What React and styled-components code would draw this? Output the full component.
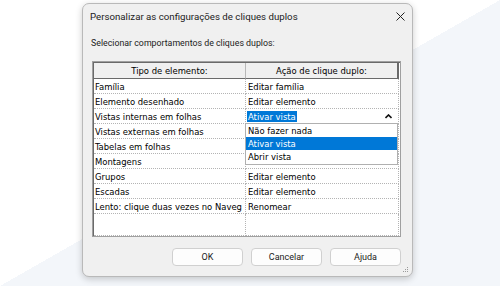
import React from 'react';
import styled, { createGlobalStyle } from 'styled-components';

const GlobalStyle = createGlobalStyle`
  html, body {
    margin: 0;
    padding: 0;
  }
  body {
    width: 500px;
    height: 286px;
    overflow: hidden;
    background: linear-gradient(to bottom right, #ffffff 50%, #f3f6fa 50%);
    font-family: Roboto, "Liberation Sans", sans-serif;
    color: #000;
  }
`;

const Page = styled.div`
  padding: 3px 0 0 82px;
`;

const Dialog = styled.div`
  position: relative;
  width: 331px;
  height: 274px;
  box-sizing: border-box;
  display: flex;
  flex-direction: column;
  background: #f0f0f0;
  border: 1px solid #b9b9b9;
  border-radius: 7px;
  box-shadow: 0 2px 7px rgba(0, 0, 0, 0.2);
`;

const TitleBar = styled.div`
  height: 25px;
  display: flex;
  align-items: center;
  justify-content: space-between;
  padding: 0 3px 0 7px;
`;

const Title = styled.span`
  font-size: 9.7px;
  color: #1b1b1b;
`;

const Close = styled.button`
  width: 18px;
  height: 18px;
  padding: 0;
  border: none;
  background: transparent;
  display: flex;
  align-items: center;
  justify-content: center;
`;

const Label = styled.div`
  height: 14px;
  line-height: 14px;
  margin: 7px 0 0 8px;
  font-size: 8.8px;
  color: #1b1b1b;
`;

const Table = styled.div`
  margin: 11px 11px 0 9px;
  height: 176px;
  box-sizing: border-box;
  padding: 1px 1px 0 1px;
  border: 1px solid #a0a0a0;
  background: #fff;
  box-shadow: inset 1px 1px 0 #6a6a6a;
  display: grid;
  grid-template-columns: 152px 1fr;
  grid-template-rows: 16px repeat(9, 15px) 1fr;
  font-family: "DejaVu Sans Condensed", "DejaVu Sans", sans-serif;
  font-size: 9.4px;
  color: #000;
`;

const HeadCell = styled.div`
  display: flex;
  align-items: center;
  justify-content: center;
  background: #f0f0f0;
  border-bottom: 1px solid #6a6a6a;
  border-right: ${p => (p.$last ? '2px solid #6a6a6a' : '1px solid #b8b8b8')};
  white-space: nowrap;
`;

const Cell = styled.div`
  position: relative;
  display: flex;
  align-items: center;
  padding: 1px 0 0 ${p => (p.$right ? '2px' : '1px')};
  border-bottom: 1px dotted #b4b4b4;
  border-right: 1px dotted #b4b4b4;
  white-space: nowrap;
  overflow: ${p => (p.$open ? 'visible' : 'hidden')};
  min-width: 0;
`;

const Selected = styled.span`
  background: #0078d7;
  color: #fff;
  padding: 0 1px;
  line-height: 11px;
  margin-left: -1px;
`;

const Caret = styled.svg`
  position: absolute;
  right: 6px;
  top: 5px;
`;

const List = styled.div`
  position: absolute;
  z-index: 2;
  top: 100%;
  left: -1px;
  width: 153px;
  box-sizing: border-box;
  background: #fff;
  border: 1px solid #b0b0b0;
  padding-bottom: 1px;
`;

const Option = styled.div`
  height: 13px;
  display: flex;
  align-items: center;
  padding-left: 2px;
  background: ${p => (p.$active ? '#0078d7' : 'transparent')};
  color: ${p => (p.$active ? '#fff' : '#000')};
`;

const Buttons = styled.div`
  display: flex;
  justify-content: flex-end;
  gap: 8px;
  margin: 11px 11px 0 0;
`;

const Button = styled.button`
  width: 71px;
  height: 18px;
  padding: 0;
  box-sizing: border-box;
  border: 1px solid #d0d0d0;
  border-radius: 4px;
  background: #fdfdfd;
  font-family: Roboto, "Liberation Sans", sans-serif;
  font-size: 9px;
  color: #1b1b1b;
`;

const Grip = styled.svg`
  position: absolute;
  right: 3px;
  bottom: 3px;
`;

// cells under the open list stay empty: the list covers them
const rows = [
  ['Família', 'Editar família'],
  ['Elemento desenhado', 'Editar elemento'],
  ['Vistas internas em folhas', null],
  ['Vistas externas em folhas', ''],
  ['Tabelas em folhas', ''],
  ['Montagens', ''],
  ['Grupos', 'Editar elemento'],
  ['Escadas', 'Editar elemento'],
  ['Lento: clique duas vezes no Naveg', 'Renomear'],
];

const options = ['Não fazer nada', 'Ativar vista', 'Abrir vista'];

export default function App() {
  return (
    <>
      <GlobalStyle />
      <Page>
        <Dialog>
          <TitleBar>
            <Title>Personalizar as configurações de cliques duplos</Title>
            <Close aria-label="Fechar">
              <svg width="9" height="9" viewBox="0 0 9 9">
                <path d="M0.5 0.5 L8.5 8.5 M8.5 0.5 L0.5 8.5" stroke="#222" strokeWidth="1" fill="none" />
              </svg>
            </Close>
          </TitleBar>
          <Label>Selecionar comportamentos de cliques duplos:</Label>
          <Table>
            <HeadCell>Tipo de elemento:</HeadCell>
            <HeadCell $last>Ação de clique duplo:</HeadCell>
            {rows.map(([kind, action]) => (
              <React.Fragment key={kind}>
                <Cell>{kind}</Cell>
                {action === null ? (
                  <Cell $right $open>
                    <Selected>Ativar vista</Selected>
                    <Caret width="7" height="5" viewBox="0 0 7 5">
                      <path d="M0.5 4 L3.5 1 L6.5 4" stroke="#111" strokeWidth="1.6" fill="none" />
                    </Caret>
                    <List>
                      {options.map(o => (
                        <Option key={o} $active={o === 'Ativar vista'}>{o}</Option>
                      ))}
                    </List>
                  </Cell>
                ) : (
                  <Cell $right>{action}</Cell>
                )}
              </React.Fragment>
            ))}
            <Cell />
            <Cell $right />
          </Table>
          <Buttons>
            <Button>OK</Button>
            <Button>Cancelar</Button>
            <Button>Ajuda</Button>
          </Buttons>
          <Grip width="7" height="7" viewBox="0 0 7 7">
            <g fill="#9a9a9a">
              <rect x="5" y="1" width="1" height="1" />
              <rect x="3" y="3" width="1" height="1" />
              <rect x="5" y="3" width="1" height="1" />
              <rect x="1" y="5" width="1" height="1" />
              <rect x="3" y="5" width="1" height="1" />
              <rect x="5" y="5" width="1" height="1" />
            </g>
          </Grip>
        </Dialog>
      </Page>
    </>
  );
}
